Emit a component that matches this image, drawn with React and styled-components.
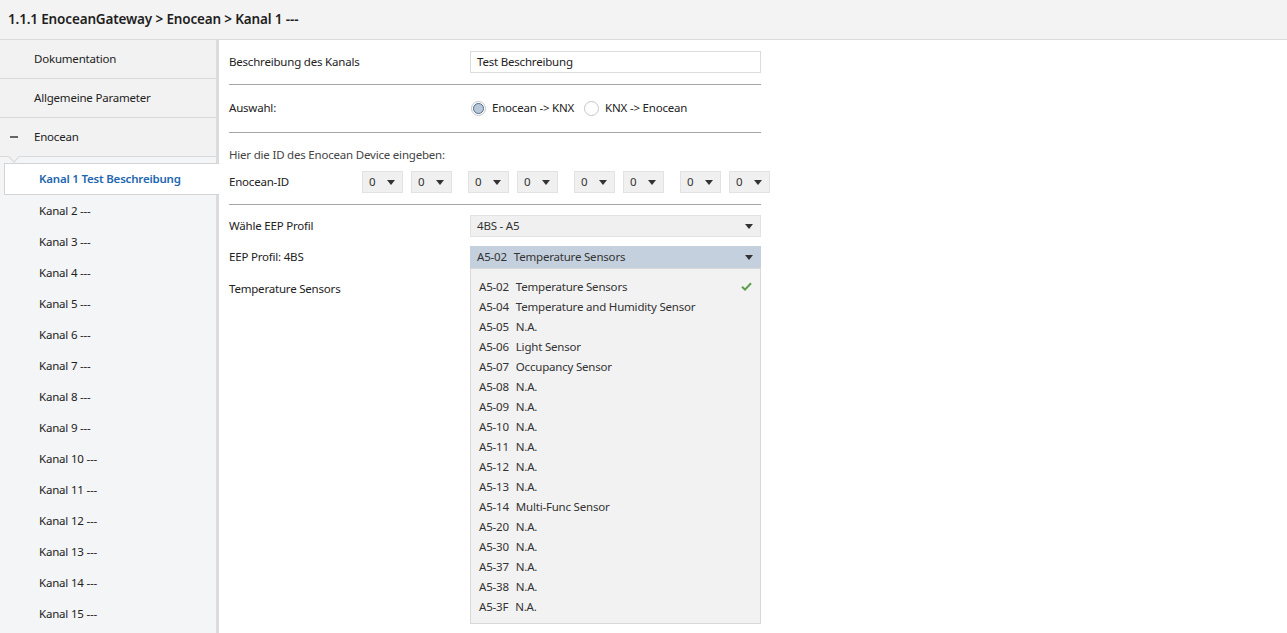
import React from "react"
import styled, { createGlobalStyle } from "styled-components"

const GlobalStyle = createGlobalStyle`
  html, body {
    margin: 0;
    padding: 0;
    background: #fff;
    font-family: "Noto Sans", "Open Sans", sans-serif;
    font-size: 11.5px;
    letter-spacing: -0.2px;
    color: #222;
  }
  * { box-sizing: border-box; }
`

const Page = styled.div`
  width: 1287px;
  height: 633px;
  overflow: hidden;
  display: flex;
  flex-direction: column;
`

const Header = styled.header`
  height: 40px;
  flex: none;
  background: #f3f3f3;
  border-bottom: 1px solid #dcdcdc;
  display: flex;
  align-items: center;
  padding: 0 0 1px 8px;
  font-size: 13.5px;
  letter-spacing: -0.15px;
  font-weight: 600;
  color: #1e1e1e;
`

const Body = styled.div`
  flex: 1;
  display: flex;
  min-height: 0;
`

const Sidebar = styled.nav`
  width: 219px;
  flex: none;
  background: #f4f5f7;
  border-right: 3px solid #dadbdd;
  display: flex;
  flex-direction: column;
`

const TopItem = styled.div`
  position: relative;
  height: 39px;
  flex: none;
  background: #f2f2f2;
  border-bottom: 1px solid #d9d9d9;
  display: flex;
  align-items: center;
  padding: 0 0 1px 34px;
  color: #222;

  ${(p) =>
    p.$open &&
    `
    &::after {
      content: "";
      position: absolute;
      left: 10px;
      bottom: -5px;
      width: 7px;
      height: 7px;
      background: #f2f2f2;
      border-right: 1px solid #d9d9d9;
      border-bottom: 1px solid #d9d9d9;
      transform: rotate(45deg);
    }
  `}
`

const Dash = styled.span`
  position: absolute;
  left: 10px;
  top: 18px;
  width: 8px;
  height: 2px;
  background: #666;
`

const ActiveItem = styled.div`
  position: relative;
  z-index: 1;
  margin: 6px -3px 0 4px;
  height: 32px;
  flex: none;
  background: #fff;
  border: 1px solid #d4d4d4;
  border-right: none;
  display: flex;
  align-items: center;
  padding: 0 0 1px 34px;
  color: #2266b0;
  font-weight: 600;
`

const ChannelItem = styled.div`
  height: 31px;
  flex: none;
  display: flex;
  align-items: center;
  padding: 0 0 1px 39px;
  color: #222;
`

const Main = styled.main`
  flex: 1;
  padding-left: 10px;
`

const Form = styled.div`
  width: 532px;
  display: flex;
  flex-direction: column;
`

const Row = styled.div`
  position: relative;
  display: grid;
  grid-template-columns: 241px 1fr;
  align-items: center;
  height: ${(p) => p.$h || 22}px;
  margin-top: ${(p) => p.$mt || 0}px;
`

const Label = styled.div`
  color: #222;
  white-space: nowrap;
  padding-bottom: 2px;
`

const Divider = styled.hr`
  margin: 0;
  border: none;
  height: 1px;
  background: #a6a6a6;
  margin-top: ${(p) => p.$mt || 0}px;
`

const TextInput = styled.div`
  height: 22px;
  border: 1px solid #dcdcdc;
  background: #fff;
  display: flex;
  align-items: center;
  padding: 0 0 1px 6px;
`

const RadioGroup = styled.div`
  display: flex;
  align-items: center;
  gap: 6px;
`

const RadioText = styled.span`
  padding-bottom: 2px;
`

const RadioCircle = styled.span`
  width: 15px;
  height: 15px;
  border-radius: 50%;
  border: 1px solid #c6c6c6;
  background: #fff;
  display: flex;
  align-items: center;
  justify-content: center;
  margin-left: ${(p) => (p.$first ? 1 : 4)}px;

  &::after {
    content: "";
    display: ${(p) => (p.$checked ? "block" : "none")};
    width: 11px;
    height: 11px;
    border-radius: 50%;
    background: #b9c8d9;
    border: 1px solid #4d6a8c;
    box-sizing: border-box;
  }
`

const Hint = styled.div`
  color: #444;
  margin-top: 14px;
  height: 16px;
  line-height: 16px;
`

const IdRow = styled.div`
  display: flex;
  align-items: center;
  height: 22px;
  margin-top: 8px;
  width: 560px;
`

const IdLabel = styled.div`
  width: 133px;
  flex: none;
  padding-bottom: 2px;
`

const IdGroups = styled.div`
  display: flex;
  gap: 16px;
`

const IdPair = styled.div`
  display: flex;
  gap: 8px;
`

const Select = styled.div`
  height: 22px;
  width: ${(p) => (p.$w ? `${p.$w}px` : "auto")};
  background: ${(p) => (p.$active ? "#c4d0dd" : "#f0f0f0")};
  border: 1px solid ${(p) => (p.$active ? "#c4d0dd" : "#e2e2e2")};
  display: flex;
  align-items: center;
  justify-content: space-between;
  padding: 0 7px 1px 6px;
  color: #333;
`

const Caret = styled.span`
  width: 0;
  height: 0;
  margin-top: 1px;
  border-left: 4px solid transparent;
  border-right: 4px solid transparent;
  border-top: 5px solid #333;
`

const Option = styled.span`
  display: flex;
  gap: 7px;
`

const Menu = styled.ul`
  position: absolute;
  top: 22px;
  left: 241px;
  width: 291px;
  margin: 0;
  padding: 8px 0 6px;
  list-style: none;
  background: #f2f2f2;
  border: 1px solid #d8d8d8;
  z-index: 2;
`

const MenuItem = styled.li`
  height: 20px;
  display: flex;
  align-items: center;
  justify-content: space-between;
  padding: 0 8px 1px 8px;
  color: #333;
  white-space: nowrap;
`

const channels = Array.from({ length: 14 }, (_, i) => `Kanal ${i + 2} ---`)

const profiles = [
  ["A5-02", "Temperature Sensors"],
  ["A5-04", "Temperature and Humidity Sensor"],
  ["A5-05", "N.A."],
  ["A5-06", "Light Sensor"],
  ["A5-07", "Occupancy Sensor"],
  ["A5-08", "N.A."],
  ["A5-09", "N.A."],
  ["A5-10", "N.A."],
  ["A5-11", "N.A."],
  ["A5-12", "N.A."],
  ["A5-13", "N.A."],
  ["A5-14", "Multi-Func Sensor"],
  ["A5-20", "N.A."],
  ["A5-30", "N.A."],
  ["A5-37", "N.A."],
  ["A5-38", "N.A."],
  ["A5-3F", "N.A."],
]

const Check = () => (
  <svg width="11" height="9" viewBox="0 0 11 9">
    <path d="M1 4.8 L4 7.6 L10 1.2" fill="none" stroke="#5c9e4c" strokeWidth="2" />
  </svg>
)

const IdSelect = () => (
  <Select $w={41}>
    0<Caret />
  </Select>
)

export default function App() {
  return (
    <Page>
      <GlobalStyle />
      <Header>1.1.1 EnoceanGateway &gt; Enocean &gt; Kanal 1 ---</Header>
      <Body>
        <Sidebar>
          <TopItem>Dokumentation</TopItem>
          <TopItem>Allgemeine Parameter</TopItem>
          <TopItem $open>
            <Dash />
            Enocean
          </TopItem>
          <ActiveItem>Kanal 1 Test Beschreibung</ActiveItem>
          {channels.map((c) => (
            <ChannelItem key={c}>{c}</ChannelItem>
          ))}
        </Sidebar>
        <Main>
          <Form>
            <Row $h={44}>
              <Label>Beschreibung des Kanals</Label>
              <TextInput>Test Beschreibung</TextInput>
            </Row>
            <Divider />
            <Row $h={47}>
              <Label>Auswahl:</Label>
              <RadioGroup>
                <RadioCircle $checked $first />
                <RadioText>Enocean -&gt; KNX</RadioText>
                <RadioCircle />
                <RadioText>KNX -&gt; Enocean</RadioText>
              </RadioGroup>
            </Row>
            <Divider />
            <Hint>Hier die ID des Enocean Device eingeben:</Hint>
            <IdRow>
              <IdLabel>Enocean-ID</IdLabel>
              <IdGroups>
                {[0, 1, 2, 3].map((g) => (
                  <IdPair key={g}>
                    <IdSelect />
                    <IdSelect />
                  </IdPair>
                ))}
              </IdGroups>
            </IdRow>
            <Divider $mt={11} />
            <Row $mt={10}>
              <Label>Wähle EEP Profil</Label>
              <Select>
                4BS - A5
                <Caret />
              </Select>
            </Row>
            <Row $mt={9}>
              <Label>EEP Profil: 4BS</Label>
              <Select $active>
                <Option>
                  <span>A5-02</span>
                  <span>Temperature Sensors</span>
                </Option>
                <Caret />
              </Select>
              <Menu>
                {profiles.map(([code, name], i) => (
                  <MenuItem key={code}>
                    <Option>
                      <span>{code}</span>
                      <span>{name}</span>
                    </Option>
                    {i === 0 && <Check />}
                  </MenuItem>
                ))}
              </Menu>
            </Row>
            <Row $mt={10}>
              <Label>Temperature Sensors</Label>
            </Row>
          </Form>
        </Main>
      </Body>
    </Page>
  )
}
